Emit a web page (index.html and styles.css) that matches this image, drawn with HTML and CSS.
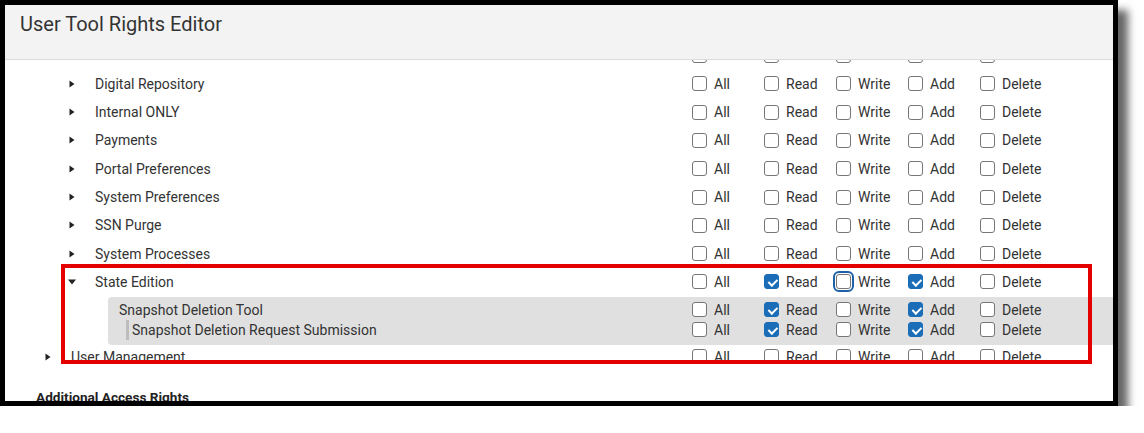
FILE: index.html
```html
<!DOCTYPE html>
<html lang="en">
<head>
<meta charset="utf-8">
<title>User Tool Rights Editor</title>
<link rel="stylesheet" href="styles.css">
</head>
<body>
<div class="frame">
  <div class="header"><h1 class="title">User Tool Rights Editor</h1></div>
  <div class="scroll">
    <div class="list">
      <div class="row l1">
        <span class="name"><span class="toggle"><svg width="6" height="8" viewBox="0 0 6 8"><path d="M0.5 0.5L5.5 4L0.5 7.5Z"/></svg></span>Communication</span>
        <span class="perm"><span class="cb"></span>All</span>
        <span class="perm"><span class="cb"></span>Read</span>
        <span class="perm"><span class="cb"></span>Write</span>
        <span class="perm"><span class="cb"></span>Add</span>
        <span class="perm"><span class="cb"></span>Delete</span>
      </div>
      <div class="row l1">
        <span class="name"><span class="toggle"><svg width="6" height="8" viewBox="0 0 6 8"><path d="M0.5 0.5L5.5 4L0.5 7.5Z"/></svg></span>Digital Repository</span>
        <span class="perm"><span class="cb"></span>All</span>
        <span class="perm"><span class="cb"></span>Read</span>
        <span class="perm"><span class="cb"></span>Write</span>
        <span class="perm"><span class="cb"></span>Add</span>
        <span class="perm"><span class="cb"></span>Delete</span>
      </div>
      <div class="row l1">
        <span class="name"><span class="toggle"><svg width="6" height="8" viewBox="0 0 6 8"><path d="M0.5 0.5L5.5 4L0.5 7.5Z"/></svg></span>Internal ONLY</span>
        <span class="perm"><span class="cb"></span>All</span>
        <span class="perm"><span class="cb"></span>Read</span>
        <span class="perm"><span class="cb"></span>Write</span>
        <span class="perm"><span class="cb"></span>Add</span>
        <span class="perm"><span class="cb"></span>Delete</span>
      </div>
      <div class="row l1">
        <span class="name"><span class="toggle"><svg width="6" height="8" viewBox="0 0 6 8"><path d="M0.5 0.5L5.5 4L0.5 7.5Z"/></svg></span>Payments</span>
        <span class="perm"><span class="cb"></span>All</span>
        <span class="perm"><span class="cb"></span>Read</span>
        <span class="perm"><span class="cb"></span>Write</span>
        <span class="perm"><span class="cb"></span>Add</span>
        <span class="perm"><span class="cb"></span>Delete</span>
      </div>
      <div class="row l1">
        <span class="name"><span class="toggle"><svg width="6" height="8" viewBox="0 0 6 8"><path d="M0.5 0.5L5.5 4L0.5 7.5Z"/></svg></span>Portal Preferences</span>
        <span class="perm"><span class="cb"></span>All</span>
        <span class="perm"><span class="cb"></span>Read</span>
        <span class="perm"><span class="cb"></span>Write</span>
        <span class="perm"><span class="cb"></span>Add</span>
        <span class="perm"><span class="cb"></span>Delete</span>
      </div>
      <div class="row l1">
        <span class="name"><span class="toggle"><svg width="6" height="8" viewBox="0 0 6 8"><path d="M0.5 0.5L5.5 4L0.5 7.5Z"/></svg></span>System Preferences</span>
        <span class="perm"><span class="cb"></span>All</span>
        <span class="perm"><span class="cb"></span>Read</span>
        <span class="perm"><span class="cb"></span>Write</span>
        <span class="perm"><span class="cb"></span>Add</span>
        <span class="perm"><span class="cb"></span>Delete</span>
      </div>
      <div class="row l1">
        <span class="name"><span class="toggle"><svg width="6" height="8" viewBox="0 0 6 8"><path d="M0.5 0.5L5.5 4L0.5 7.5Z"/></svg></span>SSN Purge</span>
        <span class="perm"><span class="cb"></span>All</span>
        <span class="perm"><span class="cb"></span>Read</span>
        <span class="perm"><span class="cb"></span>Write</span>
        <span class="perm"><span class="cb"></span>Add</span>
        <span class="perm"><span class="cb"></span>Delete</span>
      </div>
      <div class="row l1">
        <span class="name"><span class="toggle"><svg width="6" height="8" viewBox="0 0 6 8"><path d="M0.5 0.5L5.5 4L0.5 7.5Z"/></svg></span>System Processes</span>
        <span class="perm"><span class="cb"></span>All</span>
        <span class="perm"><span class="cb"></span>Read</span>
        <span class="perm"><span class="cb"></span>Write</span>
        <span class="perm"><span class="cb"></span>Add</span>
        <span class="perm"><span class="cb"></span>Delete</span>
      </div>
      <div class="row l1">
        <span class="name"><span class="toggle"><svg width="8" height="6" viewBox="0 0 8 6"><path d="M0 0.5L8 0.5L4 5.5Z"/></svg></span>State Edition</span>
        <span class="perm"><span class="cb"></span>All</span>
        <span class="perm"><span class="cb checked"></span>Read</span>
        <span class="perm"><span class="cb focus"></span>Write</span>
        <span class="perm"><span class="cb checked"></span>Add</span>
        <span class="perm"><span class="cb"></span>Delete</span>
      </div>
      <div class="band">
        <div class="row sub">
          <span class="name">Snapshot Deletion Tool</span>
          <span class="perm"><span class="cb"></span>All</span>
          <span class="perm"><span class="cb checked"></span>Read</span>
          <span class="perm"><span class="cb"></span>Write</span>
          <span class="perm"><span class="cb checked"></span>Add</span>
          <span class="perm"><span class="cb"></span>Delete</span>
        </div>
        <div class="row sub sub2">
          <span class="name"><span class="bar"></span>Snapshot Deletion Request Submission</span>
          <span class="perm"><span class="cb"></span>All</span>
          <span class="perm"><span class="cb checked"></span>Read</span>
          <span class="perm"><span class="cb"></span>Write</span>
          <span class="perm"><span class="cb checked"></span>Add</span>
          <span class="perm"><span class="cb"></span>Delete</span>
        </div>
      </div>
      <div class="row l0">
        <span class="name"><span class="toggle"><svg width="6" height="8" viewBox="0 0 6 8"><path d="M0.5 0.5L5.5 4L0.5 7.5Z"/></svg></span>User Management</span>
        <span class="perm"><span class="cb"></span>All</span>
        <span class="perm"><span class="cb"></span>Read</span>
        <span class="perm"><span class="cb"></span>Write</span>
        <span class="perm"><span class="cb"></span>Add</span>
        <span class="perm"><span class="cb"></span>Delete</span>
      </div>
    </div>
  </div>
  <h2 class="section">Additional Access Rights</h2>
  <div class="highlight"></div>
</div>
</body>
</html>
```
FILE: styles.css
```css
html, body {
  margin: 0;
  padding: 0;
  background: #ffffff;
}

body {
  font-family: Roboto, "Liberation Sans", sans-serif;
  color: #333333;
}

.frame {
  position: relative;
  width: 1108px;
  height: 396px;
  border: 5px solid #000000;
  background: #ffffff;
  overflow: hidden;
  box-shadow: 10px 10px 8px rgba(0, 0, 0, 0.6);
}

.header {
  height: 54px;
  background: #f3f3f3;
  border-bottom: 1px solid #dcdcdc;
}

.title {
  margin: 0;
  padding: 7px 0 0 15px;
  font-size: 20px;
  line-height: 24px;
  font-weight: 400;
  color: #333333;
}

.scroll {
  height: 303px;
  overflow: hidden;
}

.list {
  margin-top: -18.8px;
}

.row {
  display: grid;
  grid-template-columns: 1fr repeat(5, 72px);
  align-items: center;
  padding-right: 61px;
  height: 28.33px;
  font-size: 14px;
}

.row.l1 { padding-left: 59px; }
.row.l0 { padding-left: 35px; }

.name {
  display: flex;
  align-items: center;
  white-space: nowrap;
  color: #333333;
}

.toggle {
  display: inline-flex;
  justify-content: center;
  align-items: center;
  width: 16px;
  margin-right: 15px;
}

.toggle svg { fill: #222222; display: block; }

.perm {
  display: flex;
  align-items: center;
  gap: 7px;
  color: #333333;
}

.cb {
  position: relative;
  box-sizing: border-box;
  width: 15px;
  height: 15px;
  border: 1px solid #767676;
  border-radius: 3px;
  background: #ffffff;
  flex: none;
}

.cb.checked {
  background: #1c6db8;
  border-color: #1c6db8;
}

.cb.checked::after {
  content: "";
  position: absolute;
  left: 4.5px;
  top: 1.5px;
  width: 3.5px;
  height: 7px;
  border-right: 2px solid #ffffff;
  border-bottom: 2px solid #ffffff;
  transform: rotate(45deg);
}

.cb.focus {
  outline: 2px solid #1d62a8;
  outline-offset: 1px;
}

.band {
  margin: 0.8px 0 -2.2px 103px;
  padding: 3px 0 5px;
  background: #e0e0e0;
  border-radius: 4px 0 0 4px;
}

.row.sub {
  height: 20px;
  padding-left: 11px;
}

.row.sub2 { padding-left: 18px; }

.bar {
  width: 3px;
  height: 20px;
  background: #bdbdbd;
  margin-right: 3px;
}

.section {
  margin: 26px 0 0 31px;
  font-size: 13.6px;
  line-height: 16px;
  font-weight: 700;
  color: #222222;
}

.highlight {
  position: absolute;
  left: 56px;
  top: 259px;
  width: 1023px;
  height: 92px;
  border: 4px solid #e50000;
}
```
